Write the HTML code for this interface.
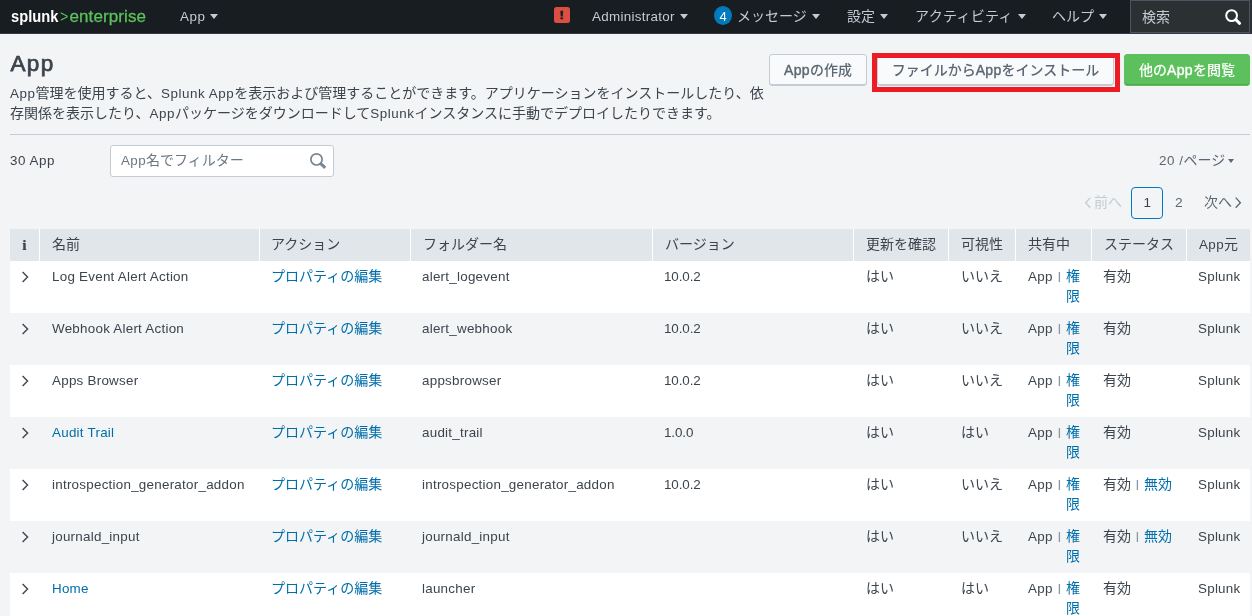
<!DOCTYPE html>
<html lang="ja">
<head>
<meta charset="utf-8">
<title>App</title>
<style>
*{box-sizing:border-box;}
html,body{margin:0;padding:0;}
body{will-change:transform;width:1252px;height:616px;overflow:hidden;background:#f2f4f5;color:#3c444d;
  font-family:"Liberation Sans","Noto Sans CJK JP",sans-serif;font-size:14px;line-height:20px;position:relative;}
a{color:#006eaa;text-decoration:none;}
.abs{position:absolute;white-space:nowrap;}
/* nav */
#nav{position:absolute;left:0;top:0;width:1252px;height:34px;background:#171d21;border-bottom:1px solid #333a45;}
#nav .item{position:absolute;top:0;height:33px;line-height:33px;color:#c3cbd4;font-size:14px;white-space:nowrap;}
.caret{display:inline-block;width:0;height:0;border-left:4px solid transparent;border-right:4px solid transparent;border-top:5.5px solid currentColor;vertical-align:middle;margin-left:5px;position:relative;top:-0.5px;}
#logo{position:absolute;left:0;top:0;height:34px;line-height:33px;font-size:17px;white-space:nowrap;}
#logo b{position:absolute;left:10.5px;top:0;color:#fff;font-weight:bold;transform:scaleX(0.865);transform-origin:0 0;}
#logo i{position:absolute;left:60px;top:0;color:#5cc05c;font-style:normal;transform:scaleX(0.85);transform-origin:0 0;}
#logo span{position:absolute;left:69.5px;top:0;color:#5cc05c;-webkit-text-stroke:0.3px #5cc05c;letter-spacing:0.1px}
#alert{position:absolute;left:554px;top:7px;width:16px;height:16px;background:#dc4e41;border-radius:2.5px;color:#171d21;font-weight:bold;font-size:11.5px;line-height:17.5px;text-align:center;}
#alert span{display:inline-block;transform:scaleX(1.35);-webkit-text-stroke:0.3px #171d21;}
#badge{position:absolute;left:714px;top:6px;width:18px;height:19px;border-radius:9px/9.5px;background:#007abd;color:#fff;font-size:13px;line-height:21px;text-align:center;}
#search{position:absolute;left:1130px;top:0;width:122px;height:33px;background:#2b3033;}
#search:before{content:"";box-sizing:border-box;position:absolute;left:0;top:0;width:120px;height:33px;border:1px solid #4b5561;}
#search .t{position:absolute;left:12px;top:0;line-height:35px;color:#c3cbd4;font-size:14px;}
/* header */
h1{position:absolute;left:10.4px;top:46.6px;margin:0;font-size:22.5px;line-height:34px;font-weight:normal;-webkit-text-stroke:0.75px #3c444d;letter-spacing:1.4px;color:#3c444d;}
.desc{position:absolute;left:10px;top:83px;width:770px;font-size:14px;line-height:20px;color:#3c444d;white-space:nowrap;}
.btn{position:absolute;top:54px;height:32px;line-height:30px;border:1px solid #c3cbd4;border-radius:3px;background:#f9fafb;box-shadow:inset 0 -1px 0 #c3cbd4;color:#5c6773;font-size:14px;font-weight:500;text-align:center;white-space:nowrap;}
.btn.green{background:#5cc05c;border-color:#5cc05c;box-shadow:inset 0 -1px 0 #4fa44f;color:#fff;}
#hl{position:absolute;left:872px;top:53px;width:248px;height:39px;border:5px solid #ed1c24;}
#hr{position:absolute;left:10px;top:134px;width:1240px;height:1px;background:#c3cbd4;}
#filter{position:absolute;left:110px;top:145px;width:224px;height:32px;border:1px solid #c3cbd4;border-radius:3px;background:#fff;}
#filter .ph{position:absolute;left:10px;top:0;line-height:29px;color:#6b7785;font-size:14px;}
/* table */
#thead{position:absolute;left:10px;top:229px;width:1240px;height:32px;background:#fff;}
.th{position:absolute;top:0;height:32px;background:#e1e6eb;color:#3c444d;line-height:30px;padding-left:12px;white-space:nowrap;font-size:14px;}
.row{position:absolute;left:10px;width:1240px;height:52px;background:#fff;font-size:14px;}
.row.odd{background:#f2f4f5;}
.row span,.row a{position:absolute;top:6px;line-height:20px;white-space:nowrap;}
.row .lat{font-size:13.4px;letter-spacing:0.25px;}
.l{letter-spacing:0.55px;font-size:13.4px;line-height:0}
.m{-webkit-text-stroke:0.4px currentColor;letter-spacing:0.3px}
.chev{position:absolute;left:11px;top:10px;}
.sep{color:#8d97a3;}
.row .c2,.row .c5,.row .c6,.row .c7a,.row .c8,.row .c8a{top:5px}
.c1{left:42px}.c2{left:261px}.c3{left:412px}.c4{left:654px;letter-spacing:-0.1px !important}.c5{left:856px}.c6{left:951px}
.c7{left:1018px}.c7s{left:1048px;font-size:10px;font-weight:bold;top:6px !important}.c7a{left:1056px}.c7b{left:1056px;top:25px !important}
.c8{left:1093px}.c8s{left:1126px;font-size:10px;font-weight:bold;top:6px !important}.c8a{left:1134px}.c9{left:1188px}
</style>
</head>
<body>
<div id="nav">
  <div id="logo"><b>splunk</b><i>&gt;</i><span>enterprise</span></div>
  <div class="item" style="left:180px"><span class="l">App</span><i class="caret" style="margin-left:4.5px"></i></div>
  <div id="alert"><span>!</span></div>
  <div class="item" style="left:592px"><span class="l" style="letter-spacing:0.3px">Administrator</span><i class="caret"></i></div>
  <div id="badge">4</div>
  <div class="item" style="left:737px">メッセージ<i class="caret"></i></div>
  <div class="item" style="left:847px">設定<i class="caret"></i></div>
  <div class="item" style="left:915px"><span style="letter-spacing:0.33px">アクティビティ</span><i class="caret" style="margin-left:4.7px"></i></div>
  <div class="item" style="left:1052px">ヘルプ<i class="caret"></i></div>
  <div id="search"><span class="t">検索</span>
    <svg style="position:absolute;left:92px;top:7px" width="22" height="20" viewBox="0 0 22 20"><circle cx="9.6" cy="8.6" r="5.4" fill="none" stroke="#fff" stroke-width="2"/><path d="M13.8 12.7 L17.6 16.3" stroke="#fff" stroke-width="3" stroke-linecap="round"/></svg>
  </div>
</div>

<h1>App</h1>
<div class="desc"><span class="l">App</span>管理を使用すると、<span class="l">Splunk App</span>を表示および管理することができます。アプリケーションをインストールしたり、依<br>存関係を表示したり、<span class="l">App</span>パッケージをダウンロードして<span class="l">Splunk</span>インスタンスに手動でデプロイしたりできます。</div>

<div class="btn" style="left:769px;width:98px"><span class="m">App</span>の作成</div>
<div class="btn" style="left:877px;width:237px">ファイルから<span class="m">App</span>をインストール</div>
<div class="btn green" style="left:1124px;width:126px">他の<span class="m">App</span>を閲覧</div>
<div id="hl"></div>
<div id="hr"></div>

<div class="abs" style="left:10px;top:150px;"><span class="l">30 App</span></div>
<div id="filter"><span class="ph"><span class="l" style="letter-spacing:0.4px">App</span>名でフィルター</span>
  <svg style="position:absolute;left:196px;top:5px" width="22" height="20" viewBox="0 0 22 20"><circle cx="9.5" cy="8.4" r="5.6" fill="none" stroke="#788593" stroke-width="1.7"/><path d="M13.2 12.2 L18.2 16.9" stroke="#788593" stroke-width="3"/></svg>
</div>
<div class="abs" style="left:1159px;top:150px;color:#5c6773"><span class="l">20 /</span>ページ<i class="caret" style="margin-left:3px;border-left-width:3.7px;border-right-width:3.7px;border-top-width:4.8px"></i></div>

<svg class="abs" style="left:1084px;top:196px" width="8" height="13" viewBox="0 0 8 13"><path d="M6.3 1.6 L1.6 6.7 L6.3 11.8" fill="none" stroke="#c3cbd4" stroke-width="1.3"/></svg>
<div class="abs" style="left:1094px;top:192px;color:#c3cbd4">前へ</div>
<div class="abs" style="left:1131px;top:187px;width:32px;height:32px;border:1px solid #007abd;border-radius:4px;text-align:center;line-height:30px;color:#3c444d;font-size:12px"><span style="display:inline-block;transform:scaleX(1.12)">1</span></div>
<div class="abs" style="left:1175px;top:193px;color:#5c6773;font-size:12px;transform:scaleX(1.15);transform-origin:0 0">2</div>
<div class="abs" style="left:1204px;top:192px;color:#5c6773">次へ</div>
<svg class="abs" style="left:1234px;top:196px" width="8" height="13" viewBox="0 0 8 13"><path d="M1.7 1.6 L6.4 6.7 L1.7 11.8" fill="none" stroke="#5c6773" stroke-width="1.3"/></svg>

<div id="thead">
  <div class="th" style="left:0;width:29px;padding-left:12px;font-family:'Liberation Serif',serif;font-weight:bold;font-size:15px;line-height:33px"><span style="display:inline-block;transform:scaleX(1.15);transform-origin:0 50%">i</span></div>
  <div class="th" style="left:30px;width:219px;padding-left:12px">名前</div>
  <div class="th" style="left:250px;width:150px;padding-left:11px">アクション</div>
  <div class="th" style="left:401px;width:241px">フォルダー名</div>
  <div class="th" style="left:643px;width:200px">バージョン</div>
  <div class="th" style="left:844px;width:94px">更新を確認</div>
  <div class="th" style="left:939px;width:66px">可視性</div>
  <div class="th" style="left:1006px;width:75px">共有中</div>
  <div class="th" style="left:1082px;width:94px">ステータス</div>
  <div class="th" style="left:1177px;width:63px"><span class="l" style="letter-spacing:0.4px">App</span>元</div>
</div>

<div class="row" style="top:261px">
  <svg class="chev" width="9" height="12" viewBox="0 0 9 12"><path d="M1.6 1 L6.6 6 L1.6 11" fill="none" stroke="#3c444d" stroke-width="1.35"/></svg>
  <span class="lat c1">Log Event Alert Action</span>
  <a class="c2" href="#">プロパティの編集</a>
  <span class="lat c3">alert_logevent</span>
  <span class="lat c4">10.0.2</span>
  <span class="c5">はい</span>
  <span class="c6">いいえ</span>
  <span class="lat c7">App</span><span class="sep c7s">|</span><a class="c7a" href="#">権</a><a class="c7b" href="#">限</a>
  <span class="c8">有効</span>
  <span class="lat c9">Splunk</span>
</div>
<div class="row odd" style="top:313px">
  <svg class="chev" width="9" height="12" viewBox="0 0 9 12"><path d="M1.6 1 L6.6 6 L1.6 11" fill="none" stroke="#3c444d" stroke-width="1.35"/></svg>
  <span class="lat c1">Webhook Alert Action</span>
  <a class="c2" href="#">プロパティの編集</a>
  <span class="lat c3">alert_webhook</span>
  <span class="lat c4">10.0.2</span>
  <span class="c5">はい</span>
  <span class="c6">いいえ</span>
  <span class="lat c7">App</span><span class="sep c7s">|</span><a class="c7a" href="#">権</a><a class="c7b" href="#">限</a>
  <span class="c8">有効</span>
  <span class="lat c9">Splunk</span>
</div>
<div class="row" style="top:365px">
  <svg class="chev" width="9" height="12" viewBox="0 0 9 12"><path d="M1.6 1 L6.6 6 L1.6 11" fill="none" stroke="#3c444d" stroke-width="1.35"/></svg>
  <span class="lat c1">Apps Browser</span>
  <a class="c2" href="#">プロパティの編集</a>
  <span class="lat c3">appsbrowser</span>
  <span class="lat c4">10.0.2</span>
  <span class="c5">はい</span>
  <span class="c6">いいえ</span>
  <span class="lat c7">App</span><span class="sep c7s">|</span><a class="c7a" href="#">権</a><a class="c7b" href="#">限</a>
  <span class="c8">有効</span>
  <span class="lat c9">Splunk</span>
</div>
<div class="row odd" style="top:417px">
  <svg class="chev" width="9" height="12" viewBox="0 0 9 12"><path d="M1.6 1 L6.6 6 L1.6 11" fill="none" stroke="#3c444d" stroke-width="1.35"/></svg>
  <a class="lat c1" href="#">Audit Trail</a>
  <a class="c2" href="#">プロパティの編集</a>
  <span class="lat c3">audit_trail</span>
  <span class="lat c4">1.0.0</span>
  <span class="c5">はい</span>
  <span class="c6">はい</span>
  <span class="lat c7">App</span><span class="sep c7s">|</span><a class="c7a" href="#">権</a><a class="c7b" href="#">限</a>
  <span class="c8">有効</span>
  <span class="lat c9">Splunk</span>
</div>
<div class="row" style="top:469px">
  <svg class="chev" width="9" height="12" viewBox="0 0 9 12"><path d="M1.6 1 L6.6 6 L1.6 11" fill="none" stroke="#3c444d" stroke-width="1.35"/></svg>
  <span class="lat c1">introspection_generator_addon</span>
  <a class="c2" href="#">プロパティの編集</a>
  <span class="lat c3">introspection_generator_addon</span>
  <span class="lat c4">10.0.2</span>
  <span class="c5">はい</span>
  <span class="c6">いいえ</span>
  <span class="lat c7">App</span><span class="sep c7s">|</span><a class="c7a" href="#">権</a><a class="c7b" href="#">限</a>
  <span class="c8">有効</span><span class="sep c8s">|</span><a class="c8a" href="#">無効</a>
  <span class="lat c9">Splunk</span>
</div>
<div class="row odd" style="top:521px">
  <svg class="chev" width="9" height="12" viewBox="0 0 9 12"><path d="M1.6 1 L6.6 6 L1.6 11" fill="none" stroke="#3c444d" stroke-width="1.35"/></svg>
  <span class="lat c1">journald_input</span>
  <a class="c2" href="#">プロパティの編集</a>
  <span class="lat c3">journald_input</span>
  <span class="c5">はい</span>
  <span class="c6">いいえ</span>
  <span class="lat c7">App</span><span class="sep c7s">|</span><a class="c7a" href="#">権</a><a class="c7b" href="#">限</a>
  <span class="c8">有効</span><span class="sep c8s">|</span><a class="c8a" href="#">無効</a>
  <span class="lat c9">Splunk</span>
</div>
<div class="row" style="top:573px">
  <svg class="chev" width="9" height="12" viewBox="0 0 9 12"><path d="M1.6 1 L6.6 6 L1.6 11" fill="none" stroke="#3c444d" stroke-width="1.35"/></svg>
  <a class="lat c1" href="#">Home</a>
  <a class="c2" href="#">プロパティの編集</a>
  <span class="lat c3">launcher</span>
  <span class="c5">はい</span>
  <span class="c6">はい</span>
  <span class="lat c7">App</span><span class="sep c7s">|</span><a class="c7a" href="#">権</a><a class="c7b" href="#">限</a>
  <span class="c8">有効</span>
  <span class="lat c9">Splunk</span>
</div>

</body>
</html>
